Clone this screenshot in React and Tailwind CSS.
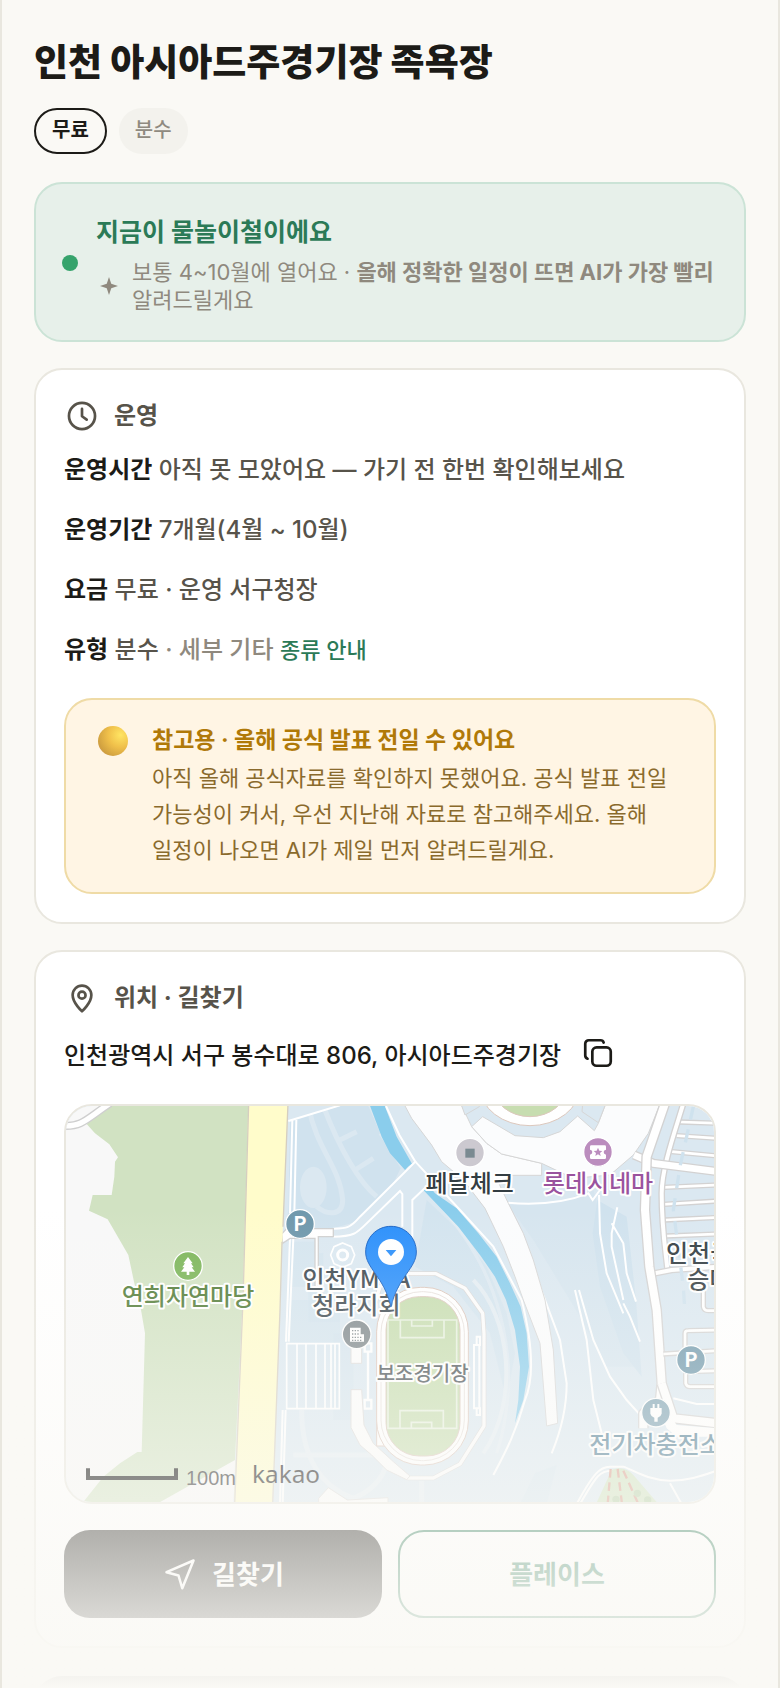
import React from "react";

function Tag({ children, active }) {
  return (
    <span
      className={
        active
          ? "rounded-full border-2 border-[#1c1b17] px-4 pt-[5px] pb-[7px] text-xl leading-[30px] font-bold text-[#1c1b17]"
          : "rounded-full bg-[#f3f2ed] px-4 pt-[7px] pb-[9px] text-xl leading-[30px] font-medium text-[#8f8a80]"
      }
    >
      {children}
    </span>
  );
}

function LineIcon({ className, strokeWidth = 1.9, children }) {
  return (
    <svg
      viewBox="0 0 24 24"
      className={className}
      fill="none"
      stroke="currentColor"
      strokeWidth={strokeWidth}
      strokeLinecap="round"
      strokeLinejoin="round"
      aria-hidden="true"
    >
      {children}
    </svg>
  );
}

function MapLabel({ x, y, fill, size = 72, anchor = "middle", children }) {
  return (
    <text
      x={x}
      y={y}
      fontSize={size}
      textAnchor={anchor}
      fill={fill}
      fontWeight="500"
      stroke="#fff"
      strokeWidth="12"
      strokeLinejoin="round"
      paintOrder="stroke"
    >
      {children}
    </text>
  );
}

function Badge({ x, y, fill, children }) {
  return (
    <g transform={`translate(${x} ${y})`}>
      <circle r="43" fill={fill} stroke="#fff" strokeWidth="4" />
      {children}
    </g>
  );
}

function Cased({ d, w }) {
  return (
    <g fill="none" strokeLinejoin="round">
      <path d={d} stroke="#d3d2d2" strokeWidth={w + 8} />
      <path d={d} stroke="#fff" strokeWidth={w} />
    </g>
  );
}

function MapDrawing() {
  return (
    <svg
      viewBox="18 18 1944 1188"
      preserveAspectRatio="xMidYMid slice"
      className="block h-[396px] w-full font-['Noto_Sans_CJK_KR',sans-serif]"
      role="img"
      aria-label="지도"
    >
      <rect x="0" y="0" width="2000" height="1220" fill="#dbe8f1" />
      <path d="M0 0H568L520 1220H0Z" fill="#f8f8f8" />
      <path
        d="M150 12H570L548 600L525 1080L290 1212H65L130 1130L180 1090L232 1056H245L255 700L243 630L222 545L205 465L143 358L87 332L98 285H155L163 230L165 185L174 172L148 133L105 100L80 72Z"
        fill="#d1e2c2"
      />
      <path d="M10 78C70 78 75 60 150 10" stroke="#cfcfcf" strokeWidth="24" fill="none" />
      <path d="M10 78C70 78 75 60 150 10" stroke="#fff" strokeWidth="16" fill="none" />

      <g fill="#d0e2ee">
        <path d="M690 66L840 18H925L970 120L1022 205L1000 250L890 365L820 385L770 385L685 350Z" />
        <path d="M690 425H765V460H745V560H690ZM745 460H790V600H840V665H745Z" opacity=".6" />
        <path d="M690 600H840V730H690Z" opacity=".5" />
        <path d="M1100 300L1190 385L1280 500L1340 640L1365 760L1340 900L1290 700L1180 560L1065 500Z" opacity=".7" />
        <path d="M1345 315L1500 305L1600 270L1640 420L1660 560L1740 800L1640 800L1560 650L1420 420Z" opacity=".4" />
        <path d="M1612 300L1700 350L1728 600L1745 830L1690 760L1620 560L1598 400Z" />
        <path d="M820 700H880V960H820Z" opacity=".4" />
        <path d="M1425 1120L1490 1095L1460 1212H1380Z" opacity=".6" />
      </g>
      <g fill="none" stroke="#dbe8f1" strokeWidth="15">
        <path d="M745 18C770 150 840 200 848 300C848 350 800 345 770 320" />
        <path d="M790 18C840 150 900 250 950 290" />
        <path d="M835 122L890 95M885 210L940 175M905 400L1010 370M970 330L1010 380" />
      </g>
      <g fill="none" stroke="#e4edf3" strokeWidth="15">
        <path d="M725 930C725 1040 760 1150 880 1195C940 1170 970 1130 980 1090M1085 1142V1212M700 1065H950" />
        <path d="M960 100C1100 300 1320 430 1345 800C1350 900 1330 1000 1310 1060" strokeWidth="10" opacity=".6" />
        <path d="M1240 540C1350 650 1380 900 1270 1060" strokeWidth="12" />
      </g>
      <ellipse cx="760" cy="262" rx="40" ry="62" fill="#dbe8f1" />

      <path
        d="M928 12L965 110L990 160L1035 210L1090 270L1195 380L1260 465L1305 530L1338 600L1365 690L1380 800L1375 900L1365 970L1390 900L1407 800L1400 700L1382 620L1350 550L1310 470L1255 400L1190 325L1125 280L1055 190L1010 110L972 12Z"
        fill="#8acdec"
      />
      <path d="M1044 200L1066 183L1130 255L1110 252L1090 272L1057 300H1028V280L960 345L890 410L820 385L890 370Z" fill="#dbe8f1" />

      <g fill="none" stroke="#fff" strokeWidth="6">
        <path d="M685 63L840 16M697 60L690 340M709 60L703 340M690 415L678 725M700 415L686 725" />
        <path d="M978 18L1018 105L1066 185L900 350C870 385 860 385 820 386" />
        <path d="M1066 185L1200 330L1300 440L1385 600C1415 720 1425 830 1395 900C1370 990 1340 1050 1300 1125" />
        <path d="M820 410C880 410 890 400 920 370L1020 273L1027 282V380M1057 430V300L1110 250" />
        <path d="M1340 310C1370 390 1410 440 1440 560L1500 720L1520 850C1520 930 1500 1000 1475 1060" />
        <path d="M1340 308C1420 315 1510 310 1585 280L1598 300L1620 270" />
        <path d="M1617 285L1620 400L1640 520L1690 640M1672 322L1655 400V440L1690 600M1655 370L1690 430L1700 520L1728 605" />
        <path d="M1545 570L1580 720L1600 900L1625 1000M1557 570L1600 720L1650 830L1700 900L1745 950M1690 610L1710 650L1740 725" />
        <path d="M668 930L660 1212M677 930L668 1212" />
        <path d="M1840 895L1910 912H1970" />
        <path d="M1550 1212C1600 1120 1620 1100 1650 1100H1690C1720 1110 1760 1140 1830 1142C1880 1142 1920 1130 1970 1112M1560 1212C1610 1125 1620 1112 1655 1112M1830 1150L1865 1212" />
      </g>

      <g fill="#fbfcfd" stroke="#d6d6d6" strokeWidth="3">
        <path d="M1032 12L1055 55L1115 135L1145 185L1210 240L1275 325L1330 440L1365 530L1390 600L1440 730L1460 978L1493 970L1480 750L1455 600L1420 480L1390 400L1345 310L1305 226H1445V190L1325 162L1280 130L1235 80L1203 12Z" />
        <path d="M1235 80L1268 50L1365 107L1450 113L1500 95L1553 48L1603 92L1615 70L1637 12H1800L1765 100L1720 165L1650 225L1540 235L1445 190L1325 162L1280 130Z" />
        <path d="M1568 12L1566 35L1615 68L1637 12ZM1203 12L1215 45L1258 20V12Z" fill="#dbe8f1" />
      </g>
      <ellipse cx="1410" cy="-40" rx="150" ry="117" fill="#fff" stroke="#dcc7bc" strokeWidth="3" />
      <ellipse cx="1410" cy="-40" rx="110" ry="90" fill="#c7ddb0" stroke="#dcc7bc" strokeWidth="3" />

      <Cased d="M1860 66L1975 70M1850 107L1975 115M1835 155L1975 168M1810 262L1975 255M1810 313L1975 303M1815 360L1975 352M1820 408L1975 402" w={8} />
      <Cased d="M1870 10C1850 80 1805 200 1805 280C1805 380 1815 440 1822 505" w={12} />
      <Cased d="M1785 520L1835 510L1975 500" w={12} />
      <Cased d="M1722 165L1780 190L1975 215" w={20} />
      <Cased d="M1815 10L1760 170L1755 330L1768 500L1790 630L1805 850L1800 900L1750 940V985" w={24} />
      <Cased d="M1805 850L1840 955L1975 970" w={24} />
      <Cased d="M1810 762L1975 752M1875 760V700Q1875 692 1885 692L1975 690M1885 815L1975 812M1877 820V850Q1880 860 1890 860H1975M1930 560V620Q1932 632 1945 632H1975" w={8} />
      <path d="M1795 925L1830 945L1850 975L1975 985V1010H1850L1820 985Z" fill="#fff" />
      <path d="M1900 20L1860 200L1840 330L1870 560L1875 640" stroke="#cfe2ee" strokeWidth="10" strokeDasharray="40 30" fill="none" />

      <path d="M665 402L680 386H820V410H775V560H765V415H690L668 430Z" fill="#fff" stroke="#d0d0d0" strokeWidth="4" />
      <g fill="none" stroke="#fff">
        <path d="M848 429L874 440L884 465L874 491L848 502L822 491L812 465L822 440Z" strokeWidth="5" />
        <circle cx="848" cy="465" r="15" strokeWidth="9" />
        <path d="M680 731H838V926H680ZM711 731V926M738 731V926M768 731V926M795 731V926M813 731V926M825 731V926" strokeWidth="5" />
        <path d="M924 755V900M914 730H934V755H914ZM914 900H934V926H914Z" strokeWidth="7" />
      </g>

      <g fill="none" strokeLinejoin="round">
        <path d="M945 610L960 560L1010 528L1040 521H1128L1215 565L1268 640L1272 700V978L1200 1092L1120 1134H1045L985 1104L925 1040" stroke="#dad8d7" strokeWidth="14" />
        <path d="M945 610L960 560L1010 528L1040 521H1128L1215 565L1268 640L1272 700V978L1200 1092L1120 1134H1045L985 1104L925 1040" stroke="#fcfcfc" strokeWidth="10" />
      </g>
      <g fill="#fcfcfc" stroke="#dedcdb" strokeWidth="3">
        <path d="M873 680H905V790H873Z" />
        <path d="M873 869H905L912 975L940 1030L1000 1085L1050 1128L1040 1139L980 1110L935 1065L900 1035L873 983Z" />
        <path d="M776 1195L805 1163L862 1200L984 1193V1212H776Z" />
      </g>
      <path d="M1242 735H1258V925H1242ZM1250 710H1260V735H1250ZM1250 925H1260V945H1250Z" fill="none" stroke="#fff" strokeWidth="6" />
      <path d="M950 690H978V1038H950Z" fill="#fff" stroke="#dcc7bc" strokeWidth="3" />
      <rect x="950" y="562" width="275" height="533" rx="132" fill="#fff" stroke="#dcc7bc" strokeWidth="3" />
      <rect x="963" y="575" width="250" height="507" rx="122" fill="none" stroke="#e8e2de" strokeWidth="3" />
      <rect x="978" y="590" width="222" height="478" rx="100" fill="#c7ddb0" stroke="#dcc7bc" strokeWidth="3" />
      <path
        d="M984 660H1190V985H984ZM1021 660H1152V713H1021ZM1055 660H1117V678H1055ZM1020 985V932H1150V985M1054 985V967H1115V985"
        fill="none"
        stroke="#e8f1df"
        strokeWidth="5"
      />

      <path d="M1655 1110C1680 1100 1700 1105 1720 1125L1795 1212H1608Z" fill="#cfe2bf" />
      <path d="M1652 1107L1643 1212M1673 1107L1686 1212M1690 1112L1735 1212" stroke="#d99d8c" strokeWidth="7" strokeDasharray="26 14" fill="none" />
      <circle cx="1732" cy="1180" r="11" fill="#b4cfa6" />
      <circle cx="1668" cy="1198" r="11" fill="#b4cfa6" />
      <circle cx="1763" cy="1200" r="11" fill="#b4cfa6" />

      <path d="M565 10L548 600L522 1212H637L660 630L668 400L685 10Z" fill="#fffccb" />
      <path d="M566 10L549 600L524 1212M684 10L669 380M666 425L660 630L638 1212" stroke="#d5cec0" strokeWidth="4" fill="none" />

      <MapLabel x={384} y={615} fill="#4f7a34">연희자연마당</MapLabel>
      <MapLabel x={889} y={564} fill="#3c484f">인천YMCA</MapLabel>
      <MapLabel x={889} y={641} fill="#3c484f">청라지회</MapLabel>
      <MapLabel x={1229} y={276} fill="#333d42">페달체크</MapLabel>
      <MapLabel x={1614} y={276} fill="#9a539e">롯데시네마</MapLabel>
      <MapLabel x={1088} y={843} fill="#4a5256" size={60}>보조경기장</MapLabel>
      <MapLabel x={1818} y={485} fill="#333d42" anchor="start">인천국제</MapLabel>
      <MapLabel x={1882} y={565} fill="#333d42" anchor="start">승마장</MapLabel>
      <MapLabel x={1588} y={1058} fill="#4f7d94" anchor="start">전기차충전소</MapLabel>

      <Badge x={720} y={372} fill="#6f98ac">
        <text y="21" fontSize="60" fontWeight="700" textAnchor="middle" fill="#fff">P</text>
      </Badge>
      <Badge x={1893} y={780} fill="#6f98ac">
        <text y="21" fontSize="60" fontWeight="700" textAnchor="middle" fill="#fff">P</text>
      </Badge>
      <Badge x={384} y={498} fill="#7bb558">
        <path d="M0-27L14-8H9L17 4H11L21 17H4V27H-4V17H-21L-11 4H-17L-9-8H-14Z" fill="#fff" />
      </Badge>
      <Badge x={890} y={703} fill="#80898d">
        <path d="M-20-20H12V0H22V22H-20Z" fill="#fff" />
        <path d="M-14-11H10M-14-1H10M-14 9H18M-14 18H18" stroke="#80898d" strokeWidth="4" strokeDasharray="4 4" />
      </Badge>
      <Badge x={1230} y={158} fill="#ccc9d0">
        <rect x="-14" y="-12" width="28" height="27" fill="#7a8a91" />
      </Badge>
      <Badge x={1614} y={156} fill="#bb8dbe">
        <path d="M-20-20H20Q24-20 24-16V-7Q17-6 17 0T24 8V17Q24 21 20 21H-20Q-24 21-24 17V8Q-17 6-17 0T-24-7V-16Q-24-20-20-20Z" fill="#fff" />
        <path d="M0-13L4-4L13-3L6 3L8 12L0 7L-8 12L-6 3L-13-3L-4-4Z" fill="#bb8dbe" />
      </Badge>
      <Badge x={1788} y={938} fill="#7fa3b4">
        <path d="M-10-26H-4V-14H4V-26H10V-14H17V3Q16 10 5 15V27H-5V15Q-16 10-17 3V-14H-10Z" fill="#fff" />
      </Badge>

      <path
        d="M993 379C1037 379 1069 414 1069 456C1069 505 1014 530 993 620C972 530 917 505 917 456C917 414 949 379 993 379Z"
        fill="#2a8ffb"
        stroke="#1a63c4"
        strokeWidth="3"
      />
      <circle cx="993" cy="456" r="39" fill="#fff" />
      <path d="M977 450H1009L993 469Z" fill="#2a8ffb" />

      <path d="M84 1105V1134H348V1105" fill="none" stroke="#000" strokeWidth="12" />
      <text x="378" y="1156" fontSize="60" fill="#222" fontFamily="Liberation Sans, sans-serif">100m</text>
      <text x="576" y="1150" fontSize="73" fill="#111" fontFamily="Noto Sans, sans-serif">kakao</text>
    </svg>
  );
}

function Row({ label, children }) {
  return (
    <p className="text-2xl leading-9 font-medium text-[#57534a]">
      <strong className="font-bold text-[#1c1b17]">{label}</strong> {children}
    </p>
  );
}

function CardTitle({ icon, children }) {
  return (
    <h2 className="flex items-center gap-[14px] text-2xl leading-9 font-bold text-[#57534a]">
      <LineIcon className="size-9 p-px">{icon}</LineIcon>
      {children}
    </h2>
  );
}

const card = "mt-[26px] rounded-[28px] border-2 border-[#e9e7df] bg-white px-7 py-7";

export default function App() {
  return (
    <div className="relative h-screen overflow-hidden border-x-2 border-[#e9e7df] bg-[#faf9f5] font-['Inter','Noto_Sans_CJK_KR',sans-serif] break-keep text-[#1c1b17]">
      <main className="px-8 pt-9">
        <h1 className="text-[37px] leading-[54px] font-extrabold">인천 아시아드주경기장 족욕장</h1>
        <div className="mt-[18px] flex gap-3">
          <Tag active>무료</Tag>
          <Tag>분수</Tag>
        </div>

        <section className="mt-7 flex items-center gap-[18px] rounded-[28px] border-2 border-[#cbe3d6] bg-[#e7f0ea] px-[26px] pt-7 pb-[26px]">
          <span className="size-4 shrink-0 rounded-full bg-[#36a36c]" />
          <div className="min-w-0 flex-1">
            <h2 className="text-[25px] leading-10 font-bold text-[#2b7a57]">지금이 물놀이철이에요</h2>
            <div className="mt-[6px] flex items-center gap-[14px] text-[#8f897e]">
              <svg viewBox="0 0 16 16" className="ml-1 size-[18px] shrink-0" aria-hidden="true">
                <path d="M8 0L10 6L16 8L10 10L8 16L6 10L0 8L6 6Z" fill="currentColor" />
              </svg>
              <p className="text-[22px] leading-7">
                보통 4~10월에 열어요 · <strong className="font-bold">올해 정확한 일정이 뜨면 AI가 가장 빨리</strong> 알려드릴게요
              </p>
            </div>
          </div>
        </section>

        <section className={card}>
          <CardTitle
            icon={
              <>
                <circle cx="12" cy="12" r="9.2" />
                <path d="M12 7V12.2L15.3 14.6" />
              </>
            }
          >
            운영
          </CardTitle>
          <div className="mt-[18px] flex flex-col gap-6">
            <Row label="운영시간">아직 못 모았어요 — 가기 전 한번 확인해보세요</Row>
            <Row label="운영기간">7개월(4월 ~ 10월)</Row>
            <Row label="요금">무료 · 운영 서구청장</Row>
            <Row label="유형">
              분수 <span className="text-[#8f897e]">· 세부 기타</span>{" "}
              <a href="#types" className="text-[22px] text-[#2b7a57]">종류 안내</a>
            </Row>
          </div>
          <aside className="mt-[30px] flex gap-6 rounded-[28px] border-2 border-[#efdba6] bg-[#fff5e4] px-8 pt-5 pb-6">
            <span className="mt-[6px] size-[30px] shrink-0 rounded-full bg-[radial-gradient(circle_at_75%_30%,#ffe563,#f0c04a_40%,#d0a040_75%,#d88a66)]" />
            <div>
              <h3 className="text-[23px] leading-10 font-bold text-[#b07908]">참고용 · 올해 공식 발표 전일 수 있어요</h3>
              <p className="text-[22px] leading-9 text-[#8a6a2c]">
                아직 올해 공식자료를 확인하지 못했어요. 공식 발표 전일 가능성이 커서, 우선 지난해 자료로 참고해주세요. 올해 일정이 나오면 AI가 제일 먼저 알려드릴게요.
              </p>
            </div>
          </aside>
        </section>

        <section className={card}>
          <CardTitle
            icon={
              <>
                <path d="M12 21.4C12 21.4 5.4 15.5 5.4 9.9A6.6 6.6 0 0 1 18.6 9.9C18.6 15.5 12 21.4 12 21.4Z" />
                <circle cx="12" cy="10" r="2.5" />
              </>
            }
          >
            위치 · 길찾기
          </CardTitle>
          <div className="mt-5 flex items-start gap-5">
            <p className="text-2xl leading-10 font-medium">인천광역시 서구 봉수대로 806, 아시아드주경기장</p>
            <button type="button" aria-label="주소 복사">
              <LineIcon className="size-[34px]">
                <rect x="8" y="8" width="13" height="13" rx="3" />
                <path d="M4.6 16C3.6 15.6 3 14.8 3 13.8V5.5A2.5 2.5 0 0 1 5.5 3H13.8C14.9 3 15.7 3.6 16 4.6" />
              </LineIcon>
            </button>
          </div>
          <div className="mt-7 overflow-hidden rounded-[28px] border-2 border-[#e9e7df]">
            <MapDrawing />
          </div>
          <div className="mt-[26px] grid grid-cols-2 gap-4">
            <button type="button" className="flex h-22 items-center justify-center gap-[14px] rounded-[26px] bg-[#1c1b17] text-[26px] font-bold text-white">
              <LineIcon className="size-9" strokeWidth={1.7}>
                <path d="M21 3L3 10.8L11 13L13.5 21.5Z" />
              </LineIcon>
              길찾기
            </button>
            <button type="button" className="h-22 rounded-[26px] border-2 border-[#2b7a57] text-[26px] font-bold text-[#2b7a57]">
              플레이스
            </button>
          </div>
        </section>

        <div className="mt-7 h-24 rounded-[28px] bg-[#1c1b17]" />
      </main>
      <div className="pointer-events-none absolute inset-x-0 bottom-0 h-[480px] bg-linear-to-b from-[#faf9f5]/0 to-[#faf9f5]" />
    </div>
  );
}
